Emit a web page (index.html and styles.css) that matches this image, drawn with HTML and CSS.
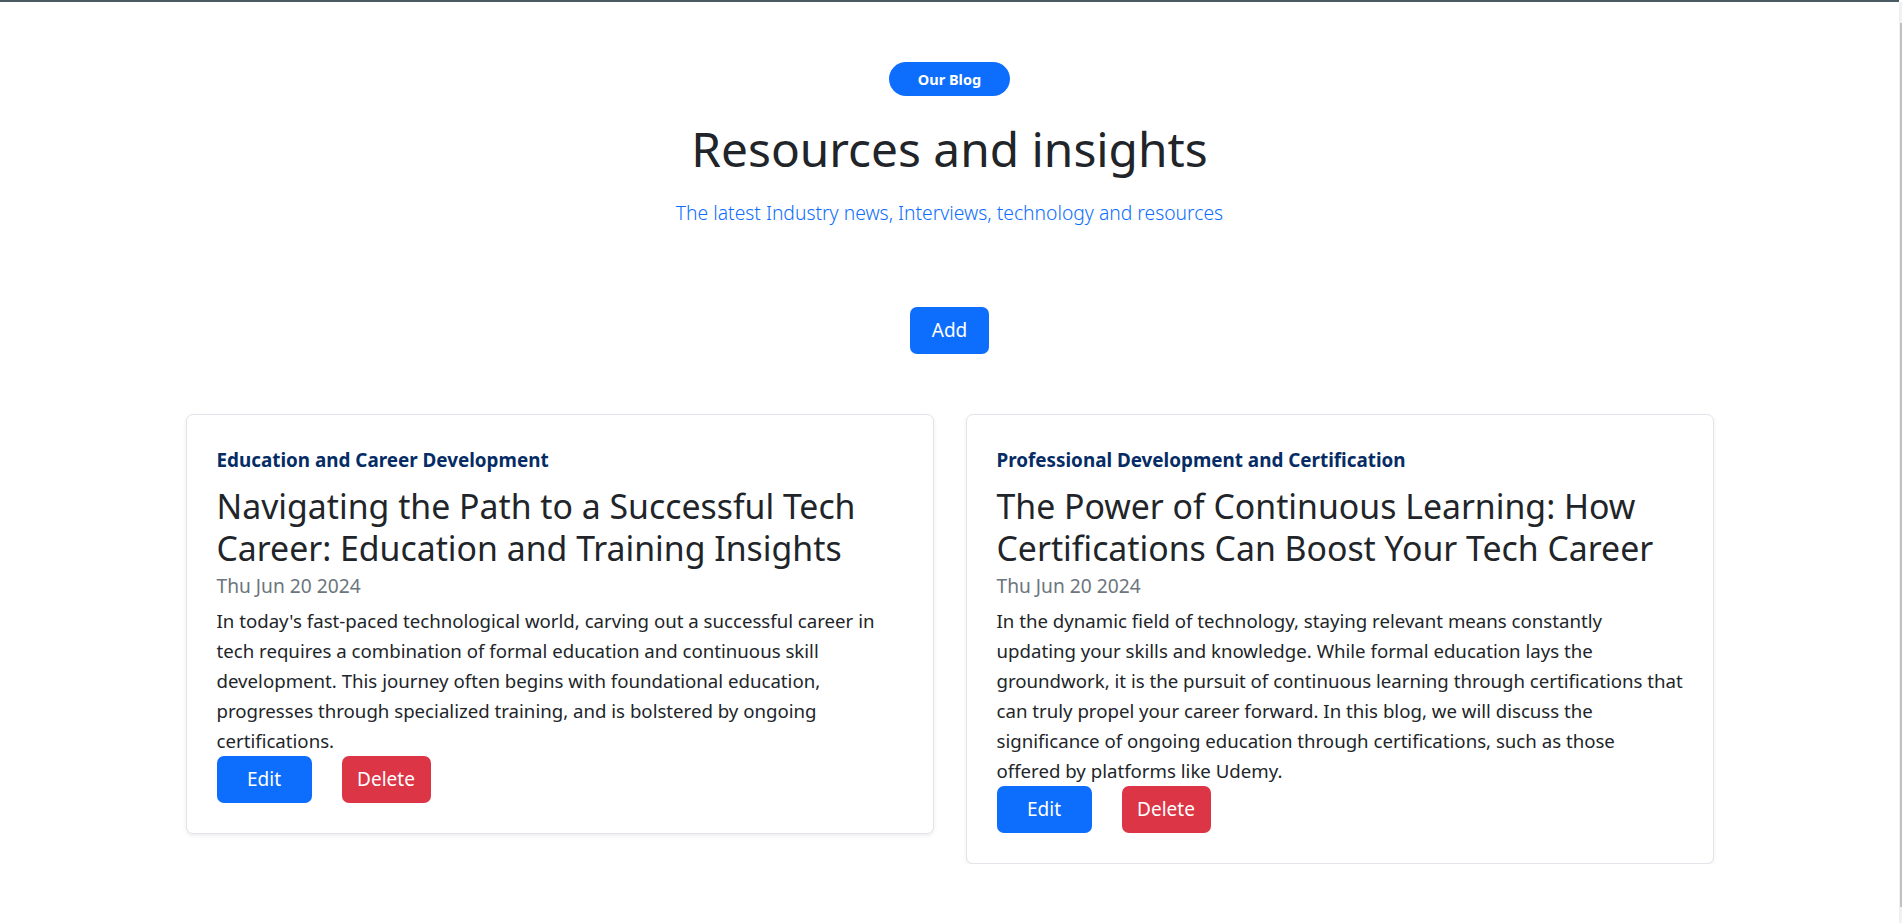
FILE: index.html
```html
<!DOCTYPE html>
<html lang="en">
<head>
<meta charset="utf-8">
<title>Resources and insights</title>
<link rel="stylesheet" href="styles.css">
</head>
<body>
<div class="topbar"></div>
<div class="scrollbar"><div class="thumb"></div></div>
<main class="page">
  <header class="hero">
    <span class="pill">Our Blog</span>
    <h1 class="title">Resources and insights</h1>
    <p class="subtitle">The latest Industry news, Interviews, technology and resources</p>
    <button class="btn btn-add">Add</button>
  </header>
  <section class="cards">
    <article class="card">
      <div class="category">Education and Career Development</div>
      <h2 class="card-title">Navigating the Path to a Successful Tech Career: Education and Training Insights</h2>
      <div class="date">Thu Jun 20 2024</div>
      <p class="excerpt">In today's fast-paced technological world, carving out a successful career in tech requires a combination of formal education and continuous skill development. This journey often begins with foundational education, progresses through specialized training, and is bolstered by ongoing certifications.</p>
      <div class="actions">
        <button class="btn btn-edit">Edit</button>
        <button class="btn btn-delete">Delete</button>
      </div>
    </article>
    <article class="card">
      <div class="category">Professional Development and Certification</div>
      <h2 class="card-title">The Power of Continuous Learning: How Certifications Can Boost Your Tech Career</h2>
      <div class="date">Thu Jun 20 2024</div>
      <p class="excerpt">In the dynamic field of technology, staying relevant means constantly<br>updating your skills and knowledge. While formal education lays the groundwork, it is the pursuit of continuous learning through certifications that can truly propel your career forward. In this blog, we will discuss the significance of ongoing education through certifications, such as those<br>offered by platforms like Udemy.</p>
      <div class="actions">
        <button class="btn btn-edit">Edit</button>
        <button class="btn btn-delete">Delete</button>
      </div>
    </article>
  </section>
</main>
</body>
</html>
```

FILE: styles.css
```css
* { box-sizing: border-box; }

html, body {
  margin: 0;
  padding: 0;
  background: #ffffff;
}

body {
  font-family: "Noto Sans", "Open Sans", sans-serif;
  color: #212529;
  padding-right: 3px;
  overflow: hidden;
}

.topbar {
  height: 2px;
  background: #4a5a63;
}

.scrollbar {
  position: fixed;
  top: 2px;
  right: 0;
  bottom: 0;
  width: 3px;
  background: #f1f1f1;
}

.scrollbar .thumb {
  position: absolute;
  top: 21px;
  bottom: 16px;
  right: 0;
  width: 2px;
  background: #c1c1c1;
}

.page {
  display: flex;
  flex-direction: column;
  align-items: center;
}

.hero {
  display: flex;
  flex-direction: column;
  align-items: center;
  padding-top: 60px;
}

.pill {
  display: inline-block;
  height: 34px;
  line-height: 34px;
  padding: 0 29px;
  border-radius: 17px;
  background: #0d6efd;
  color: #fff;
  font-size: 14.5px;
  font-weight: 700;
}

.title {
  margin: 25px 0 0;
  font-size: 47.8px;
  line-height: 56px;
  font-weight: 400;
  color: #212529;
}

.subtitle {
  margin: 21px 0 0;
  font-size: 19.3px;
  line-height: 30px;
  font-weight: 300;
  color: #0d6efd;
}

.btn {
  border: 0;
  font-family: inherit;
  font-size: 19px;
  line-height: 47px;
  height: 47px;
  padding: 0;
  border-radius: 7px;
  color: #fff;
  cursor: pointer;
  text-align: center;
}

.btn-add {
  margin-top: 79px;
  width: 79px;
  background: #0d6efd;
}

.cards {
  margin-top: 60px;
  width: 1528px;
  display: grid;
  grid-template-columns: 1fr 1fr;
  column-gap: 32px;
  align-items: start;
}

.card {
  border: 1px solid #e1e4e8;
  border-radius: 7px;
  box-shadow: 0 2px 4px rgba(0, 0, 0, 0.075);
  padding: 30px 30px 30px;
  background: #fff;
}

.category {
  font-size: 18.85px;
  line-height: 31px;
  font-weight: 700;
  color: #052c65;
}

.card-title {
  margin: 9px 0 0;
  font-size: 33.8px;
  line-height: 42px;
  font-weight: 400;
  color: #212529;
}

.date {
  margin-top: 5px;
  font-size: 19.2px;
  line-height: 24px;
  color: #6c757d;
}

.excerpt {
  margin: 8px -6px 0 0;
  font-size: 18.65px;
  line-height: 30px;
  color: #212529;
}

.actions {
  display: flex;
  gap: 30px;
}

.btn-edit {
  width: 95px;
  background: #0d6efd;
}

.btn-delete {
  width: 89px;
  background: #dc3545;
}
```
